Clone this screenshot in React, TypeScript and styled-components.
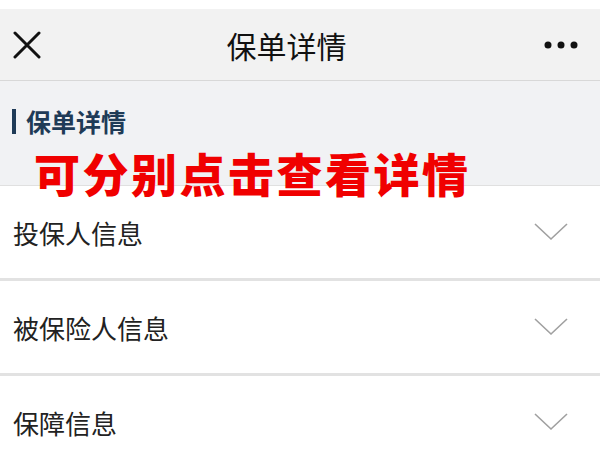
import React from "react";
import styled, { createGlobalStyle } from "styled-components";

const GlobalStyle = createGlobalStyle`
  html, body {
    margin: 0;
    padding: 0;
    background: #ffffff;
    font-family: "Noto Sans CJK SC", "Noto Sans", sans-serif;
  }
`;

const items = ["投保人信息", "被保险人信息", "保障信息"];

const App: React.FC = (): React.ReactElement => {
  return (
    <Page>
      <GlobalStyle />
      <TopStrip />
      <NavBar>
        <NavIcon>
          <svg width="28" height="28" viewBox="0 0 28 28">
            <path d="M2 2 L26 26 M26 2 L2 26" stroke="#111" strokeWidth="3" strokeLinecap="round" />
          </svg>
        </NavIcon>
        <NavTitle>保单详情</NavTitle>
        <NavIcon $right>
          <svg width="34" height="8" viewBox="0 0 34 8">
            <circle cx="4" cy="4" r="3.5" fill="#111" />
            <circle cx="17" cy="4" r="3.5" fill="#111" />
            <circle cx="30" cy="4" r="3.5" fill="#111" />
          </svg>
        </NavIcon>
      </NavBar>
      <Section>
        <SectionTitle>保单详情</SectionTitle>
        <Annotation>可分别点击查看详情</Annotation>
      </Section>
      <List>
        {items.map((label) => (
          <Row key={label}>
            <RowLabel>{label}</RowLabel>
            <svg width="36" height="20" viewBox="0 0 36 20">
              <path d="M2 2 L18 17 L34 2" stroke="#a0a0a0" strokeWidth="1.6" fill="none" />
            </svg>
          </Row>
        ))}
      </List>
    </Page>
  );
};

const Page = styled.div`
  width: 600px;
  height: 449px;
  overflow: hidden;
  position: relative;
  background: #ffffff;
`;

const TopStrip = styled.div`
  height: 9px;
  background: #ffffff;
`;

const NavBar = styled.div`
  display: flex;
  align-items: center;
  height: 71px;
  padding: 0 22px 0 13px;
  background: #f2f2f2;
  border-bottom: 1px solid #d8d8d8;
`;

const NavIcon = styled.div<{ $right?: boolean }>`
  display: flex;
  align-items: center;
  width: 60px;
  justify-content: ${(p) => (p.$right ? "flex-end" : "flex-start")};
`;

const NavTitle = styled.div`
  flex: 1;
  text-align: center;
  font-size: 30px;
  color: #111111;
  margin-left: 2px;
  margin-right: 20px;
`;

const Section = styled.div`
  position: relative;
  height: 105px;
  background: #f1f2f4;
  border-bottom: 1px solid #e0e0e0;
  padding: 26px 0 0 12px;
  box-sizing: border-box;
`;

const SectionTitle = styled.div`
  display: flex;
  align-items: center;
  font-size: 25px;
  font-weight: 700;
  color: #1f3b57;
  line-height: 28px;

  &::before {
    content: "";
    width: 4px;
    height: 25px;
    background: #1f3b57;
    margin-right: 10px;
  }
`;

const Annotation = styled.div`
  position: absolute;
  left: 34px;
  top: 64px;
  font-size: 46px;
  font-weight: 900;
  color: #f00000;
  letter-spacing: 2.5px;
  line-height: 54px;
  z-index: 2;
`;

const List = styled.div`
  display: flex;
  flex-direction: column;
`;

const Row = styled.div`
  display: flex;
  align-items: center;
  justify-content: space-between;
  height: 92px;
  padding: 0 31px 0 13px;
  background: #ffffff;
  border-bottom: 3px solid #e2e2e2;
`;

const RowLabel = styled.div`
  font-size: 26px;
  color: #222222;
`;

export default App;
